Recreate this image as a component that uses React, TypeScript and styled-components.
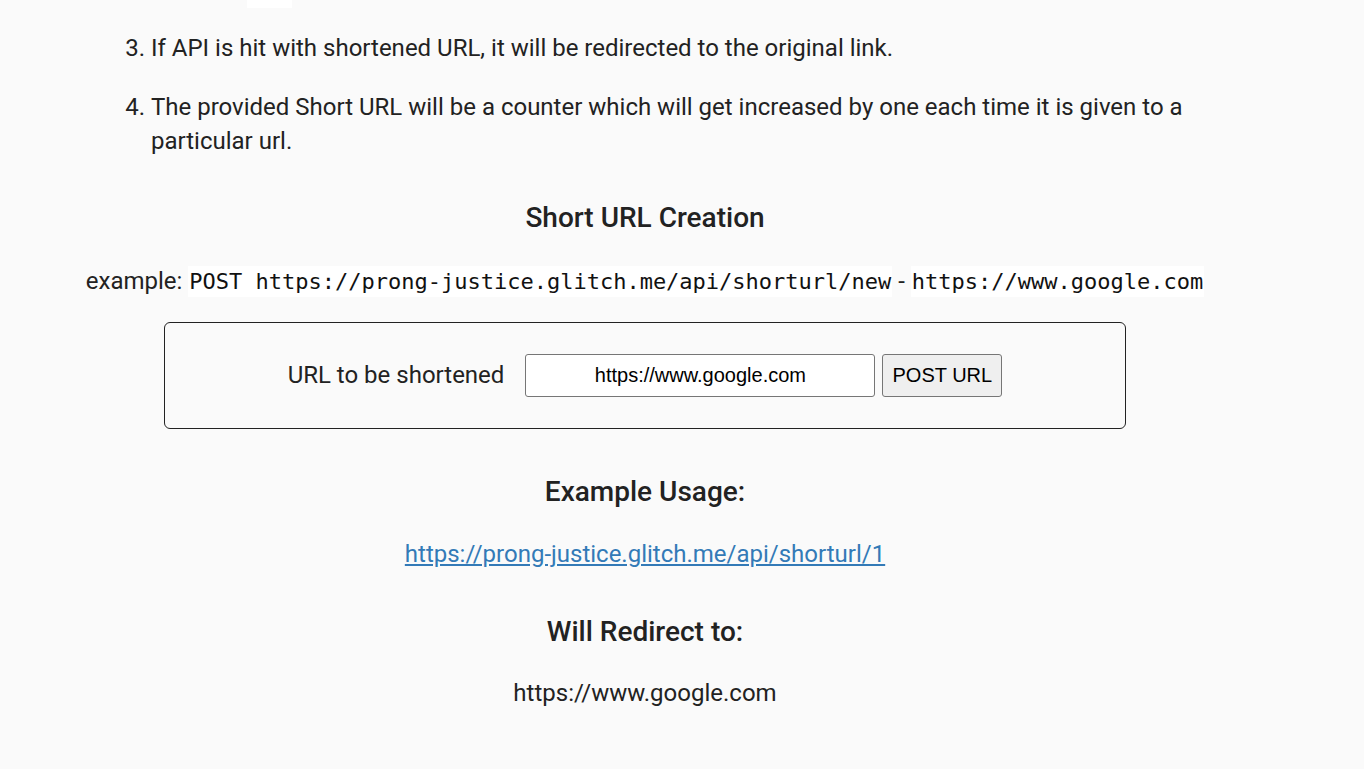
import styled, { createGlobalStyle } from 'styled-components';

const GlobalStyle = createGlobalStyle`
  html, body {
    margin: 0;
    padding: 0;
    background-color: #fafafa;
  }
  body {
    font-family: Roboto, "Liberation Sans", sans-serif;
    color: #222222;
    overflow: hidden;
  }
`;

const Page = styled.div`
  width: 1132px;
  margin-left: 79px;
  padding-bottom: 60px;
`;

// bottom edge of the code span from the item scrolled out above
const Remnant = styled.div`
  width: 45px;
  height: 8px;
  margin-left: 168px;
  background-color: #ffffff;
`;

const StyleOl = styled.ol`
  margin: 0;
  padding-left: 72px;
  font-size: 24px;
  line-height: 34px;
`;

const StyleLi = styled.li<{ $top: number }>`
  margin-top: ${(p) => p.$top}px;
`;

const Heading = styled.h3<{ $top: number }>`
  margin: ${(p) => p.$top}px 0 0;
  font-size: 28px;
  font-weight: 500;
  text-align: center;
  line-height: 32px;
`;

const Line = styled.p<{ $top: number }>`
  margin: ${(p) => p.$top}px 0 0;
  font-size: 24px;
  line-height: 34px;
  text-align: center;
`;

const Code = styled.code`
  font-family: "DejaVu Sans Mono", "Liberation Mono", monospace;
  font-size: 22px;
  background-color: #ffffff;
  padding: 3px 1px;
  color: #111111;
`;

const FormBox = styled.form`
  width: 962px;
  height: 107px;
  box-sizing: border-box;
  margin: 23px auto 0;
  border: 1px solid #222222;
  border-radius: 6px;
  display: flex;
  align-items: center;
  justify-content: center;
`;

const Label = styled.label`
  font-size: 24px;
  margin-right: 21px;
  margin-top: -2px;
`;

const UrlInput = styled.input`
  width: 350px;
  height: 43px;
  box-sizing: border-box;
  border: 1px solid #767676;
  border-radius: 3px;
  background-color: #ffffff;
  font-family: "Liberation Sans", Arial, sans-serif;
  font-size: 20px;
  text-align: center;
  color: #000000;
  padding: 0 8px;
`;

const PostButton = styled.button`
  width: 120px;
  height: 43px;
  margin-left: 7px;
  box-sizing: border-box;
  border: 1px solid #767676;
  border-radius: 3px;
  background-color: #efefef;
  font-family: "Liberation Sans", Arial, sans-serif;
  font-size: 20px;
  color: #000000;
  padding: 0;
`;

const Link = styled.a`
  color: #337ab7;
  text-decoration: underline;
`;

const App = () => {
  return (
    <>
      <GlobalStyle />
      <Page>
        <Remnant />
        <StyleOl start={3}>
          <StyleLi $top={23}>If API is hit with shortened URL, it will be redirected to the original link.</StyleLi>
          <StyleLi $top={25}>
            The provided Short URL will be a counter which will get increased by one each time it is given to a
            particular url.
          </StyleLi>
        </StyleOl>
        <Heading $top={44}>Short URL Creation</Heading>
        <Line $top={30}>
          example: <Code>POST https://prong-justice.glitch.me/api/shorturl/new</Code> -{' '}
          <Code>https://www.google.com</Code>
        </Line>
        <FormBox onSubmit={(e) => e.preventDefault()}>
          <Label htmlFor="url">URL to be shortened</Label>
          <UrlInput id="url" type="text" defaultValue="https://www.google.com" />
          <PostButton type="submit">POST URL</PostButton>
        </FormBox>
        <Heading $top={47}>Example Usage:</Heading>
        <Line $top={29}>
          <Link href="#">https://prong-justice.glitch.me/api/shorturl/1</Link>
        </Line>
        <Heading $top={45}>Will Redirect to:</Heading>
        <Line $top={28}>https://www.google.com</Line>
      </Page>
    </>
  );
};

export default App;
